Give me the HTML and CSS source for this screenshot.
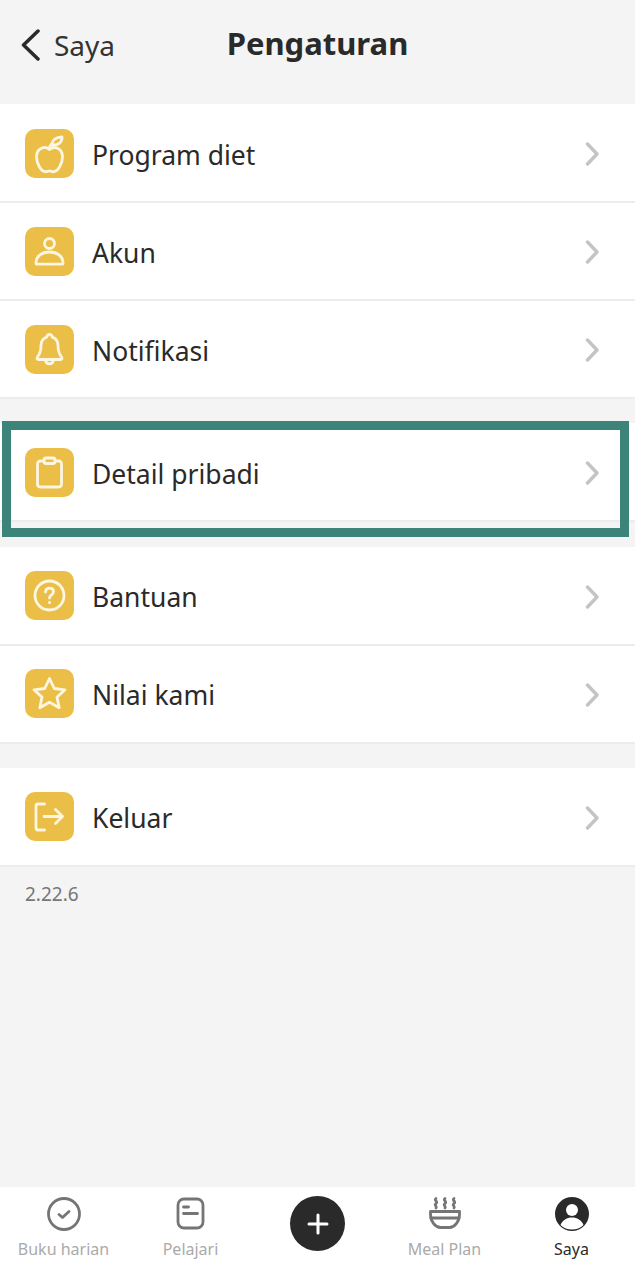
FILE: index.html
```html
<!DOCTYPE html>
<html lang="id">

<head>
    <meta charset="UTF-8">
    <meta name="viewport" content="width=device-width, initial-scale=1.0">
    <title>Pengaturan</title>
    <link rel="stylesheet" href="styles.css">
</head>

<body>
    <header class="topbar">
        <a class="back">
            <svg class="back-icon" viewBox="0 0 20 32"><path d="M17 2 2.500 16 17 30"/></svg>
            <span>Saya</span>
        </a>
        <h1>Pengaturan</h1>
    </header>

    <main class="content">
        <section class="group">
            <div class="row">
                <span class="tile">
                    <svg viewBox="0 0 49 49"><path d="M24.500 20.500c-2-1.700-4.500-2.500-7-1.700-4 1.200-6 4.500-6 9 0 6 4 15 9.500 15 1.500 0 2.300-1 3.500-1s2 1 3.500 1c5.500 0 9.500-9 9.500-15 0-4.500-2-7.800-6-9-2.500-.8-5 0-7 1.700Z"/><path d="M24.500 20c0-2 .3-3.500 2-5"/><path d="M27 16c0-4.500 3.500-8 10-8 .3 5-3.500 8.500-10 8Z"/></svg>
                </span>
                <span class="label">Program diet</span>
                <svg class="chevron" viewBox="0 0 14 24"><path d="M2.500 2 12 12l-9.500 10"/></svg>
            </div>
            <div class="row">
                <span class="tile">
                    <svg viewBox="0 0 49 49"><circle cx="24.500" cy="16.500" r="5"/><path d="M11 36c0-6.500 5.500-11 13.500-11S38 29.500 38 36c0 .8-.5 1.200-1.200 1.200H12.200c-.7 0-1.200-.4-1.200-1.200Z"/></svg>
                </span>
                <span class="label">Akun</span>
                <svg class="chevron" viewBox="0 0 14 24"><path d="M2.500 2 12 12l-9.500 10"/></svg>
            </div>
            <div class="row">
                <span class="tile">
                    <svg viewBox="0 0 49 49"><path d="M24.500 9.500c-1.500 0-2.500 1-2.800 2.600-3.700 1.300-5.700 4.300-5.700 8.400 0 5-.7 8-3.500 11.500-1 1.300-.4 2.500 1 2.500h22c1.400 0 2-1.200 1-2.500-2.800-3.500-3.500-6.500-3.500-11.500 0-4.100-2-7.100-5.700-8.400-.3-1.600-1.300-2.600-2.800-2.600Z"/><path d="M20.500 35c.3 2.500 2 3.800 4 3.800s3.700-1.300 4-3.800"/></svg>
                </span>
                <span class="label">Notifikasi</span>
                <svg class="chevron" viewBox="0 0 14 24"><path d="M2.500 2 12 12l-9.500 10"/></svg>
            </div>
        </section>

        <section class="group">
            <div class="row">
                <span class="tile">
                    <svg viewBox="0 0 49 49"><path d="M19 13h-3.500c-1.700 0-3 1.300-3 3v20c0 1.700 1.300 3 3 3h18c1.700 0 3-1.300 3-3V16c0-1.700-1.300-3-3-3H30"/><rect x="19" y="10" width="11" height="5.500" rx="2"/></svg>
                </span>
                <span class="label">Detail pribadi</span>
                <svg class="chevron" viewBox="0 0 14 24"><path d="M2.500 2 12 12l-9.500 10"/></svg>
            </div>
        </section>

        <section class="group">
            <div class="row">
                <span class="tile">
                    <svg viewBox="0 0 49 49"><circle cx="24.500" cy="24.500" r="14.500"/><path class="thin" d="M20.500 21c.2-2.400 1.900-3.800 4-3.800 2.300 0 4 1.400 4 3.500 0 3-4 3.200-4 6.300"/><circle class="dot" cx="24.500" cy="31.500" r="1.500"/></svg>
                </span>
                <span class="label">Bantuan</span>
                <svg class="chevron" viewBox="0 0 14 24"><path d="M2.500 2 12 12l-9.500 10"/></svg>
            </div>
            <div class="row">
                <span class="tile">
                    <svg viewBox="0 0 49 49"><path d="M24.500 9.500 29.300 19.500 40 20.800l-8 7.300 2.200 10.600-9.700-5.400-9.700 5.400L17 28.100l-8-7.300 10.700-1.300Z"/></svg>
                </span>
                <span class="label">Nilai kami</span>
                <svg class="chevron" viewBox="0 0 14 24"><path d="M2.500 2 12 12l-9.500 10"/></svg>
            </div>
        </section>

        <section class="group">
            <div class="row">
                <span class="tile">
                    <svg viewBox="0 0 49 49"><path d="M19.500 12h-6.500c-1.200 0-2 .8-2 2v22c0 1.200.8 2 2 2h6.500"/><path class="thin" d="M19 24.500h18.500M30.500 17.500l7 7-7 7"/></svg>
                </span>
                <span class="label">Keluar</span>
                <svg class="chevron" viewBox="0 0 14 24"><path d="M2.500 2 12 12l-9.500 10"/></svg>
            </div>
        </section>

        <p class="version">2.22.6</p>
    </main>

    <nav class="tabbar">
        <a class="tab">
            <svg viewBox="0 0 36 36"><circle cx="18" cy="18" r="15.500"/><path d="m13 18.500 3.500 3 6.500-6"/></svg>
            <span>Buku harian</span>
        </a>
        <a class="tab">
            <svg viewBox="0 0 36 36"><rect x="5" y="3" width="25" height="29" rx="6"/><path d="M10.500 11h5M10.500 17.500h14"/></svg>
            <span>Pelajari</span>
        </a>
        <a class="tab tab-add">
            <span class="fab"><svg viewBox="0 0 24 24"><path d="M12 3v18M3 12h18"/></svg></span>
        </a>
        <a class="tab">
            <svg viewBox="0 0 36 36"><path class="steam" d="M9 2.500c-2.500 2 2.500 3 0 5s1.500 2.500 0 4.500M18 2.500c-2.500 2 2.500 3 0 5s1.500 2.500 0 4.500M27 2.500c-2.500 2 2.500 3 0 5s1.500 2.500 0 4.500"/><path d="M3.500 15.500h29v3c0 7-5 13-10 13h-9c-5 0-10-6-10-13Z"/><path d="M4 22h28"/></svg>
            <span>Meal Plan</span>
        </a>
        <a class="tab tab-active">
            <svg viewBox="0 0 36 36"><circle class="solid" cx="18" cy="18" r="17"/><circle class="cut" cx="18" cy="14" r="6"/><path class="cut" d="M6.500 29c2-5 6.500-7.500 11.500-7.500s9.500 2.500 11.500 7.500c-3 3-7 4.500-11.500 4.500S9.500 32 6.500 29Z"/></svg>
            <span>Saya</span>
        </a>
    </nav>

    <div class="highlight"></div>
</body>

</html>
```

FILE: styles.css
```css
* {
    box-sizing: border-box;
}

body {
    margin: 0;
    height: 1280px;
    display: flex;
    flex-direction: column;
    background: #f4f4f4;
    color: #2a2a2a;
    font-family: "Noto Sans", sans-serif;
    position: relative;
    overflow: hidden;
}

.topbar {
    height: 104px;
    flex: none;
    position: relative;
    display: flex;
    justify-content: center;
    padding-top: 21px;
}

.topbar h1 {
    margin: 0;
    font-size: 31px;
    line-height: 44px;
    font-weight: 700;
}

.back {
    position: absolute;
    left: 21px;
    top: 28px;
    display: flex;
    align-items: center;
    gap: 13px;
    font-size: 28px;
    line-height: 34px;
    color: #333;
}

.back-icon {
    width: 20px;
    height: 32px;
    fill: none;
    stroke: #2a2a2a;
    stroke-width: 3.500;
    stroke-linecap: round;
    stroke-linejoin: round;
}

.content {
    flex: 1;
    display: flex;
    flex-direction: column;
}

.group {
    background: #fff;
    padding-top: 1px;
    margin-bottom: 24.300px;
}

.row {
    height: 98px;
    display: flex;
    align-items: center;
    padding: 0 36px 0 25px;
    border-bottom: 2px solid #ececec;
}

.tile {
    width: 49px;
    height: 49px;
    flex: none;
    border-radius: 10px;
    background: #ebbe48;
    display: block;
}

.tile svg {
    width: 49px;
    height: 49px;
    display: block;
    fill: none;
    stroke: #fdf6e1;
    stroke-width: 2.800;
    stroke-linecap: round;
    stroke-linejoin: round;
}

.tile .dot {
    fill: #fdf6e1;
    stroke: none;
}

.label {
    flex: 1;
    margin-left: 18px;
    padding-top: 3px;
    font-size: 26.500px;
    line-height: 34px;
}

.chevron {
    width: 14px;
    height: 24px;
    margin-top: 2px;
    fill: none;
    stroke: #c4c4c4;
    stroke-width: 3.400;
    stroke-linecap: round;
    stroke-linejoin: round;
}

.version {
    margin: -9px 0 0 25px;
    font-size: 19px;
    line-height: 24px;
    color: #777;
}

.tabbar {
    height: 93px;
    flex: none;
    background: #fff;
    display: grid;
    grid-template-columns: repeat(5, 127px);
}

.tab {
    display: flex;
    flex-direction: column;
    align-items: center;
    padding-top: 9px;
    font-size: 16px;
    line-height: 20px;
    color: #aaa;
}

.tab svg {
    width: 36px;
    height: 36px;
    margin-bottom: 7px;
    fill: none;
    stroke: #757575;
    stroke-width: 2.800;
    stroke-linecap: round;
    stroke-linejoin: round;
}

.tab-active {
    color: #2a2a2a;
}

.tab svg .solid {
    fill: #2a2a2a;
    stroke: none;
}

.tab svg .cut {
    fill: #fff;
    stroke: none;
}

.fab {
    width: 55px;
    height: 55px;
    border-radius: 50%;
    background: #2a2a2a;
    display: flex;
    align-items: center;
    justify-content: center;
}

.tab .fab svg {
    width: 24px;
    height: 24px;
    margin: 0;
    stroke: #fff;
    stroke-width: 3;
}

.highlight {
    position: absolute;
    left: 2px;
    top: 421px;
    width: 627px;
    height: 116px;
    border: 9px solid #3c8379;
}
```
